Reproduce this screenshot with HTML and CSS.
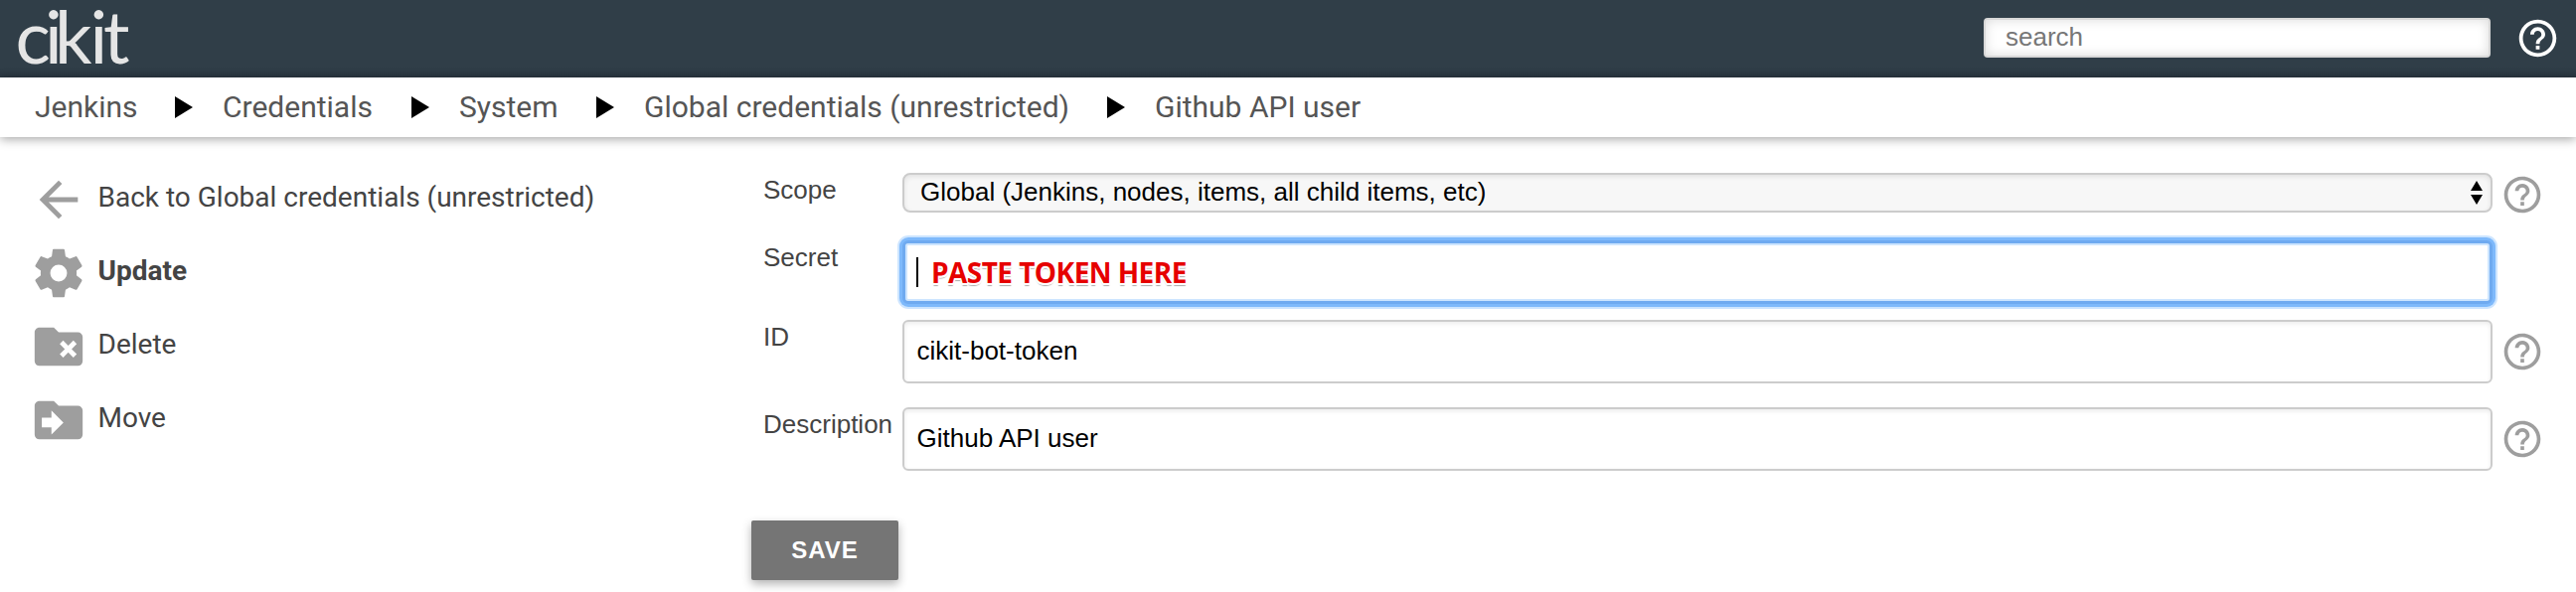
FILE: index.html
```html
<!DOCTYPE html>
<html lang="en">
<head>
<meta charset="utf-8">
<title>Github API user [Jenkins]</title>
<link rel="stylesheet" href="styles.css">
</head>
<body>
<svg class="defs" width="0" height="0">
  <symbol id="help" viewBox="0 0 24 24"><path d="M11 18h2v-2h-2v2zm1-16C6.48 2 2 6.48 2 12s4.48 10 10 10 10-4.48 10-10S17.52 2 12 2zm0 18c-4.41 0-8-3.59-8-8s3.59-8 8-8 8 3.59 8 8-3.59 8-8 8zm0-14c-2.21 0-4 1.79-4 4h2c0-1.1.9-2 2-2s2 .9 2 2c0 2-3 1.75-3 5h2c0-2.25 3-2.5 3-5 0-2.21-1.79-4-4-4z"/></symbol>
  <symbol id="tri" viewBox="0 0 18 22"><path d="M0 0L18 11L0 22z"/></symbol>
</svg>
<header class="header">
  <svg class="logo" width="140" height="78"><text y="64" x="15.5 45 55 90.5 104">cikit</text></svg>
  <div class="search">search</div>
  <svg class="header-help"><use href="#help"/></svg>
</header>
<nav class="crumbs">
  <span class="crumb c1">Jenkins</span><svg class="tri"><use href="#tri"/></svg>
  <span class="crumb c2">Credentials</span><svg class="tri"><use href="#tri"/></svg>
  <span class="crumb c3">System</span><svg class="tri"><use href="#tri"/></svg>
  <span class="crumb c4">Global credentials (unrestricted)</span><svg class="tri"><use href="#tri"/></svg>
  <span class="crumb">Github API user</span>
</nav>
<div class="page">
  <aside class="side">
    <a class="task"><svg viewBox="0 0 24 24"><path d="M20 11H7.83l5.59-5.59L12 4l-8 8 8 8 1.41-1.41L7.83 13H20v-2z"/></svg><span>Back to Global credentials (unrestricted)</span></a>
    <a class="task active"><svg viewBox="0 0 24 24"><path d="M12 15.5A3.5 3.5 0 0 1 8.5 12 3.5 3.5 0 0 1 12 8.5a3.5 3.5 0 0 1 3.5 3.5 3.5 3.5 0 0 1-3.5 3.5m7.43-2.53c.04-.32.07-.64.07-.97s-.03-.66-.07-1l2.11-1.63c.19-.15.24-.42.12-.64l-2-3.46c-.12-.22-.39-.31-.61-.22l-2.49 1c-.52-.39-1.06-.73-1.69-.98l-.37-2.65A.506.506 0 0 0 14 2h-4c-.25 0-.46.18-.5.42l-.37 2.65c-.63.25-1.17.59-1.69.98l-2.49-1c-.22-.09-.49 0-.61.22l-2 3.46c-.13.22-.07.49.12.64L4.57 11c-.04.34-.07.67-.07 1s.03.65.07.97l-2.11 1.66c-.19.15-.25.42-.12.64l2 3.46c.12.22.39.3.61.22l2.49-1.01c.52.4 1.06.74 1.69.99l.37 2.65c.04.24.25.42.5.42h4c.25 0 .46-.18.5-.42l.37-2.65c.63-.26 1.17-.59 1.69-.99l2.49 1.01c.22.08.49 0 .61-.22l2-3.46c.12-.22.07-.49-.12-.64z"/></svg><span>Update</span></a>
    <a class="task"><svg viewBox="0 0 24 24"><path fill-rule="evenodd" d="M10 4l2 2h8a2 2 0 0 1 2 2v10a2 2 0 0 1-2 2H4a2 2 0 0 1-2-2V6c0-1.11.89-2 2-2zM12.46 10.88L14.59 13l-2.13 2.12 1.42 1.42L16 14.41l2.12 2.13 1.42-1.42L17.41 13l2.13-2.12-1.42-1.42L16 11.59l-2.12-2.13z"/></svg><span>Delete</span></a>
    <a class="task"><svg viewBox="0 0 24 24"><path fill-rule="evenodd" d="M10 4l2 2h8a2 2 0 0 1 2 2v10a2 2 0 0 1-2 2H4a2 2 0 0 1-2-2V6c0-1.11.89-2 2-2zM9 18l5-5-5-5v3H5v4h4z"/></svg><span>Move</span></a>
  </aside>
  <main class="form">
    <div class="row scope"><label>Scope</label>
      <div class="field select"><span>Global (Jenkins, nodes, items, all child items, etc)</span>
        <svg class="updown" viewBox="0 0 12 24"><path d="M0 10L6 0l6 10zM0 14h12L6 24z"/></svg></div>
      <svg class="help"><use href="#help"/></svg></div>
    <div class="row secret"><label>Secret</label>
      <div class="field focus"><i class="caret"></i><b class="note">PASTE TOKEN HERE</b></div></div>
    <div class="row"><label>ID</label><div class="field"><span>cikit-bot-token</span></div><svg class="help"><use href="#help"/></svg></div>
    <div class="row"><label>Description</label><div class="field"><span>Github API user</span></div><svg class="help"><use href="#help"/></svg></div>
    <button class="save">SAVE</button>
  </main>
</div>
</body>
</html>
```
FILE: styles.css
```css
* { box-sizing: border-box; }
body { margin: 0; background: #fff; color: #444; font-family: "Liberation Sans", Arial, sans-serif; font-size: 26px; height: 596px; overflow: hidden; }
svg { display: block; flex: none; }
.defs { position: absolute; }
.header { height: 78px; background: linear-gradient(#303e48 0, #303e48 68px, #2b3741 78px); display: flex; align-items: flex-start; }
.logo { overflow: visible; }
.logo text { font: 74px Lato, sans-serif; fill: #e5e5e5; }
.search { margin: 18px 25px 0 auto; width: 510px; height: 40px; border: 2px solid #d8d8d8; border-radius: 4px; background: #fff; box-shadow: inset 0 0 12px rgba(0,0,0,.14); padding-left: 20px; line-height: 35px; color: #777; }
.header-help { width: 45px; height: 45px; margin: 15.5px 16px 0 0; fill: #fff; }
.crumbs { position: relative; height: 60px; background: #fff; box-shadow: 0 2px 10px rgba(0,0,0,.36); display: flex; align-items: center; padding-left: 35px; font: 30px/60px Roboto, sans-serif; color: #555; white-space: nowrap; }
.c1 { width: 141px; }
.c2 { width: 190px; }
.c3 { width: 138px; }
.c4 { width: 466px; }
.tri { width: 18px; height: 22px; margin-right: 30px; fill: #000; }
.page { display: flex; padding-top: 26px; }
.side { width: 768px; padding-left: 30px; }
.task { display: flex; align-items: center; height: 74px; font: 28px/33px Roboto, sans-serif; color: #444; }
.task svg { width: 58px; height: 58px; margin-right: 10.5px; fill: #9e9e9e; }
.task span { margin-top: -5px; }
.active { font-weight: 700; }
.form { width: 1824px; padding-top: 10px; }
.row { display: flex; height: 64px; margin-bottom: 24px; }
.row label { width: 140px; line-height: 30px; padding-top: 2px; flex: none; }
.field { width: 1600px; height: 64px; border: 2px solid #ccc; border-radius: 6px; box-shadow: inset 0 2px 4px rgba(0,0,0,.08); background: #fff; color: #000; padding-left: 12.5px; line-height: 58px; display: flex; align-items: flex-start; }
.help { width: 44px; height: 44px; margin: 10px 0 0 8px; fill: #9e9e9e; }
.scope { height: 40px; margin-bottom: 28px; }
.scope .help { margin-top: 0; }
.select { height: 40px; border-radius: 8px; background: #f7f7f7; line-height: 34px; padding: 0 8px 0 16px; justify-content: space-between; box-shadow: inset 0 2px 5px rgba(0,0,0,.09); }
.updown { width: 12px; height: 24px; margin-top: 6px; }
.secret { margin-bottom: 16px; }
.focus { border-color: #6faaf0; border-width: 3px; padding-left: 11px; align-items: center; box-shadow: 0 0 0 3px #7eb9fb, 0 0 0 5px #cde5ff, inset 0 0 0 2px #cde5ff; }
.caret { width: 2px; height: 30px; background: #000; }
.note { margin-left: 13px; font: 700 28px/56px "Open Sans", sans-serif; letter-spacing: -.55px; color: #e60000; text-shadow: -1px 1px #fff, 1px 1px #fff, -1px 2px #fff, 1px 2px #fff, 0 3px 1px #aaa; white-space: nowrap; }
.save { display: block; margin: 50px 0 0 -12px; width: 148px; height: 60px; border: 0; border-radius: 2px; background: #757575; color: #fff; font: 700 24px/60px "Liberation Sans", Arial, sans-serif; letter-spacing: 1px; padding: 0; box-shadow: 0 4px 10px rgba(0,0,0,.3); }
```
